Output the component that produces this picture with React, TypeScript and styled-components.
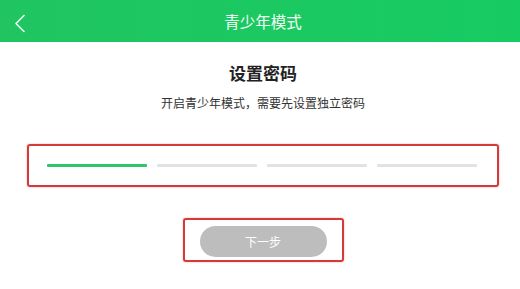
import styled, { createGlobalStyle } from 'styled-components'

const GlobalStyle = createGlobalStyle`
  html, body {
    margin: 0;
    padding: 0;
    background: #ffffff;
  }
  body {
    font-family: "Noto Sans CJK SC", "Noto Sans", sans-serif;
  }
`

const Page = styled.div`
  width: 520px;
  height: 289px;
  overflow: hidden;
  display: flex;
  flex-direction: column;
`

const Header = styled.header`
  position: relative;
  height: 42px;
  display: flex;
  align-items: center;
  justify-content: center;
  padding-left: 6px;
  background: linear-gradient(90deg, #20c561 0%, #17cb63 100%);
`

const BackButton = styled.button`
  position: absolute;
  left: 10px;
  top: 11px;
  width: 20px;
  height: 24px;
  padding: 0;
  border: none;
  background: none;
  display: flex;
  align-items: center;
  justify-content: center;
`

const HeaderTitle = styled.h1`
  margin: 0;
  font-size: 15.5px;
  font-weight: 400;
  line-height: 20px;
  color: #effff4;
`

const Main = styled.main`
  display: flex;
  flex-direction: column;
  align-items: center;
  padding: 19px 21px 0 27px;
`

const Title = styled.h2`
  margin: 0;
  font-size: 17px;
  font-weight: 700;
  line-height: 24px;
  color: #222222;
`

const Subtitle = styled.p`
  margin: 9px 0 0;
  font-size: 12px;
  line-height: 18px;
  color: #333333;
`

const Highlight = styled.div<{ $padding: string }>`
  box-sizing: border-box;
  border: 2px solid #d43a3a;
  border-radius: 3px;
  box-shadow: 0 0 2px rgba(212, 58, 58, 0.45);
  padding: ${(p) => p.$padding};
`

const CodeBox = styled(Highlight)`
  align-self: stretch;
  margin-top: 32px;
  height: 43px;
  display: flex;
  align-items: center;
  gap: 10px;
`

const Bar = styled.div<{ $active: boolean }>`
  width: 100px;
  height: 3px;
  border-radius: 1px;
  background: ${(p) => (p.$active ? '#2ec56b' : '#e2e2e2')};
`

const ButtonBox = styled(Highlight)`
  margin-top: 31px;
  width: 161px;
  height: 44px;
  display: flex;
`

const NextButton = styled.button`
  width: 127px;
  height: 31px;
  border: none;
  border-radius: 16px;
  background: #bdbdbd;
  color: #ffffff;
  font-family: inherit;
  font-size: 12px;
  padding: 0;
`

export default function App() {
  const steps = [true, false, false, false]
  return (
    <Page>
      <GlobalStyle />
      <Header>
        <BackButton aria-label="返回">
          <svg width="12" height="19" viewBox="0 0 12 19" fill="none">
            <path
              d="M10 1.5 L2 9.5 L10 17.5"
              stroke="#e6fff0"
              strokeWidth="1.6"
              strokeLinecap="round"
              strokeLinejoin="round"
            />
          </svg>
        </BackButton>
        <HeaderTitle>青少年模式</HeaderTitle>
      </Header>
      <Main>
        <Title>设置密码</Title>
        <Subtitle>开启青少年模式，需要先设置独立密码</Subtitle>
        <CodeBox $padding="0 18px">
          {steps.map((active, i) => (
            <Bar key={i} $active={active} />
          ))}
        </CodeBox>
        <ButtonBox $padding="6px 14px 3px 15px">
          <NextButton disabled>下一步</NextButton>
        </ButtonBox>
      </Main>
    </Page>
  )
}
